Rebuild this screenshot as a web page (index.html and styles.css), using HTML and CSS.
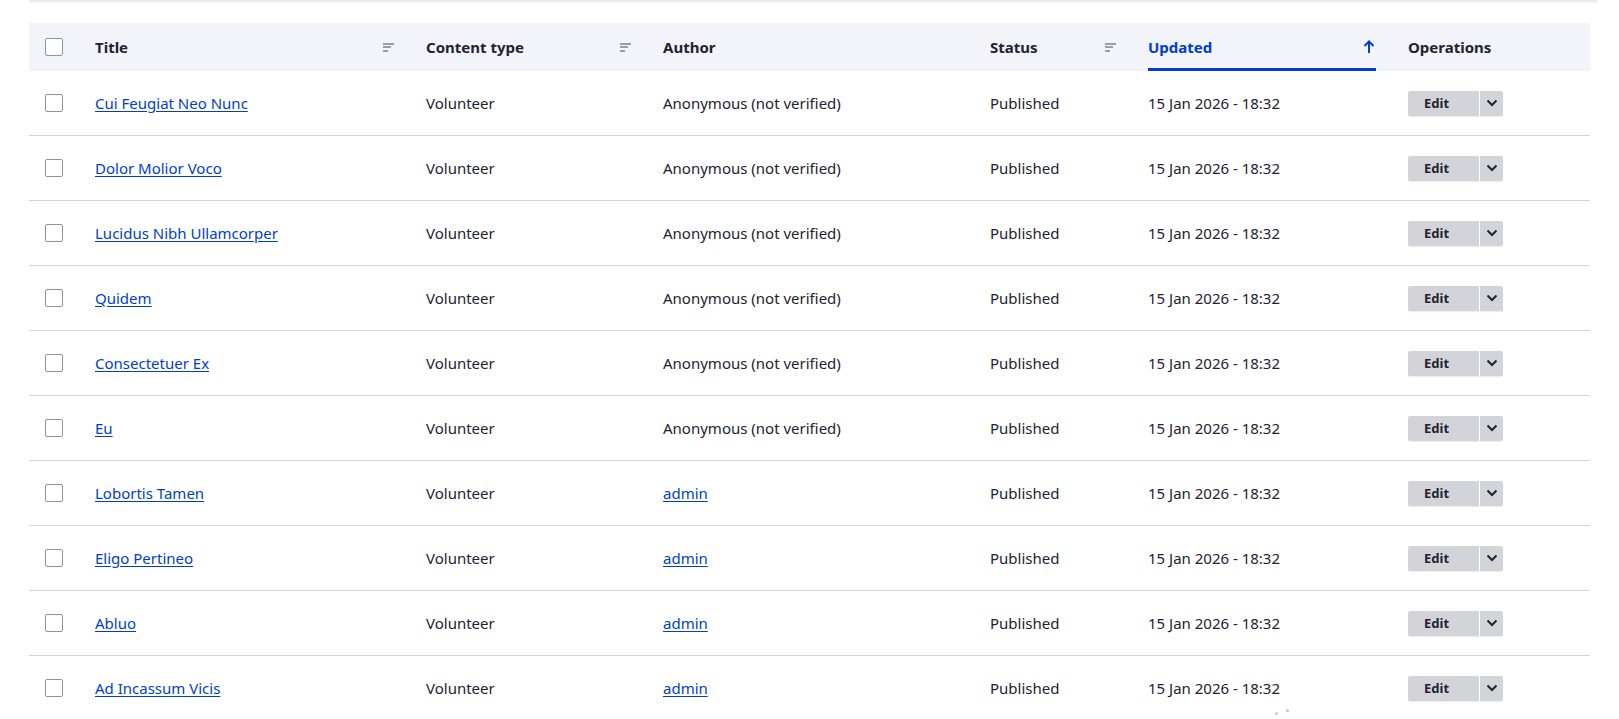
FILE: index.html
```html
<!DOCTYPE html>
<html lang="en">
<head>
    <meta charset="UTF-8">
    <meta name="viewport" content="width=device-width, initial-scale=1.0">
    <title>Content</title>
    <link rel="stylesheet" href="styles.css">
</head>
<body>

    <div class="sticky-shadow"></div>

    <div class="page">
        <table class="content-table">
            <colgroup>
                <col class="col-select">
                <col class="col-title">
                <col class="col-type">
                <col class="col-author">
                <col class="col-status">
                <col class="col-updated">
                <col class="col-ops">
            </colgroup>
            <thead>
                <tr>
                    <th class="select-cell"><span class="checkbox"></span></th>
                    <th><span class="sortable">Title <span class="sort-icon"><i></i><i></i><i></i></span></span></th>
                    <th><span class="sortable">Content type <span class="sort-icon"><i></i><i></i><i></i></span></span></th>
                    <th>Author</th>
                    <th><span class="sortable">Status <span class="sort-icon"><i></i><i></i><i></i></span></span></th>
                    <th><span class="sortable is-active">Updated
                        <svg class="sort-arrow" width="12" height="14" viewBox="0 0 12 14"><path d="M6 13V1.5M1.5 6L6 1.5 10.5 6" fill="none" stroke="currentColor" stroke-width="2"/></svg>
                    </span></th>
                    <th>Operations</th>
                </tr>
            </thead>
            <tbody id="rows"></tbody>
        </table>
    </div>

    <div class="throbber"><i></i><i></i></div>

    <script>
        const items = [
            ["Cui Feugiat Neo Nunc", "Anonymous (not verified)"],
            ["Dolor Molior Voco", "Anonymous (not verified)"],
            ["Lucidus Nibh Ullamcorper", "Anonymous (not verified)"],
            ["Quidem", "Anonymous (not verified)"],
            ["Consectetuer Ex", "Anonymous (not verified)"],
            ["Eu", "Anonymous (not verified)"],
            ["Lobortis Tamen", "admin"],
            ["Eligo Pertineo", "admin"],
            ["Abluo", "admin"],
            ["Ad Incassum Vicis", "admin"]
        ];

        const tbody = document.getElementById("rows");
        items.forEach(([title, author]) => {
            const authorCell = author === "admin" ? `<a href="#">admin</a>` : author;
            tbody.insertAdjacentHTML("beforeend", `
                <tr>
                    <td class="select-cell"><span class="checkbox"></span></td>
                    <td><a href="#">${title}</a></td>
                    <td>Volunteer</td>
                    <td>${authorCell}</td>
                    <td>Published</td>
                    <td>15 Jan 2026 - 18:32</td>
                    <td>
                        <div class="dropbutton">
                            <a class="dropbutton-action" href="#">Edit</a>
                            <span class="dropbutton-toggle">
                                <svg width="12" height="8" viewBox="0 0 12 8"><path d="M1.5 1.5L6 6 10.5 1.5" fill="none" stroke="currentColor" stroke-width="2"/></svg>
                            </span>
                        </div>
                    </td>
                </tr>`);
        });
    </script>

</body>
</html>
```

FILE: styles.css
```css
/* General */
body {
    margin: 0;
    font-family: 'Noto Sans', 'Open Sans', sans-serif;
    font-size: 15px;
    color: #222330;
    background: #fff;
}

a {
    color: #003ecc;
    text-decoration: underline;
    text-underline-offset: 2px;
}

/* Shadow left by the sticky toolbar above */
.sticky-shadow {
    height: 4px;
    margin: 0 21px 0 29px;
    background: linear-gradient(#e4e5ea, #fff);
}

.page {
    padding: 19px 29px 0;
}

/* Table */
.content-table {
    width: 100%;
    table-layout: fixed;
    border-collapse: collapse;
}

.col-select { width: 50px; }
.col-title { width: 331px; }
.col-type { width: 237px; }
.col-author { width: 327px; }
.col-status { width: 158px; }
.col-updated { width: 260px; }
.col-ops { width: 198px; }

.content-table th {
    height: 48px;
    padding: 0 16px;
    background: #f3f4f9;
    text-align: left;
    font-weight: 700;
    white-space: nowrap;
}

.content-table td {
    height: 64px;
    padding: 0 16px;
    border-bottom: 1px solid #d3d4d9;
    white-space: nowrap;
}

.select-cell {
    padding-right: 0 !important;
}

/* Checkbox */
.checkbox {
    display: block;
    width: 16px;
    height: 16px;
    border: 1px solid #8e929c;
    border-radius: 2px;
    background: #fff;
}

/* Sortable headers */
.sortable {
    display: flex;
    align-items: center;
    justify-content: space-between;
    height: 48px;
    box-sizing: border-box;
}

.sortable.is-active {
    color: #003ecc;
    border-bottom: 3px solid #003ecc;
    padding-top: 3px;
}

.sort-icon {
    display: flex;
    flex-direction: column;
    gap: 1.5px;
    width: 11px;
}

.sort-icon i {
    display: block;
    height: 2px;
    background: #9a9eac;
}

.sort-icon i:nth-child(1) { width: 11px; }
.sort-icon i:nth-child(2) { width: 8px; }
.sort-icon i:nth-child(3) { width: 5px; }

.sort-arrow {
    margin-right: 1px;
}

/* Edit dropbutton */
.dropbutton {
    display: inline-flex;
    height: 25px;
    border-radius: 2px;
    background: #d3d4d9;
    box-shadow: 0 1px 1px rgba(0, 0, 0, 0.08);
}

.dropbutton-action {
    width: 72px;
    box-sizing: border-box;
    padding-left: 16px;
    display: flex;
    align-items: center;
    color: #222330;
    font-size: 13px;
    font-weight: 700;
    text-decoration: none;
    border-right: 1px solid #fff;
}

.dropbutton-toggle {
    width: 23px;
    display: flex;
    align-items: center;
    justify-content: center;
    color: #222330;
}

/* Loading dots */
.throbber {
    position: absolute;
    left: 1275px;
    top: 712px;
    display: flex;
    gap: 8px;
}

.throbber i {
    display: block;
    width: 3px;
    height: 3px;
    border-radius: 50%;
    background: #c8c9cf;
}

.throbber i:last-child {
    margin-top: -3px;
}
```
